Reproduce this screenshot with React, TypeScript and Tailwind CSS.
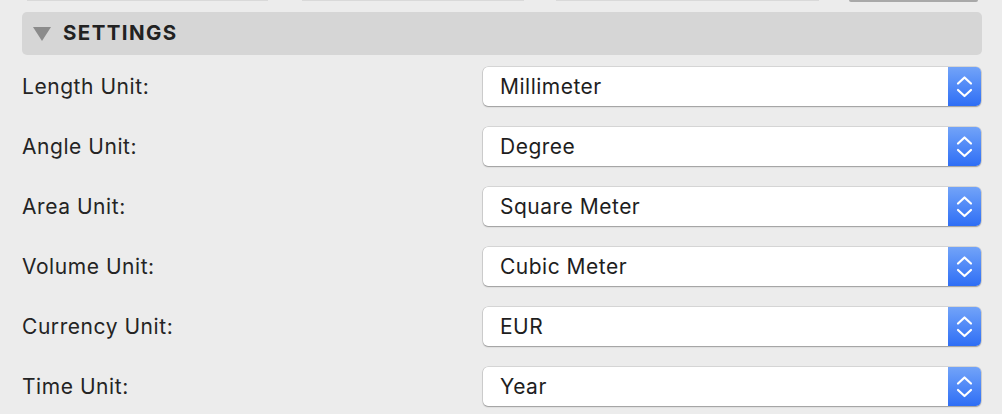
import React from "react";

// Preferences panel: a collapsible SETTINGS group with unit pickers.

const rows: { label: string; value: string }[] = [
  { label: "Length Unit:", value: "Millimeter" },
  { label: "Angle Unit:", value: "Degree" },
  { label: "Area Unit:", value: "Square Meter" },
  { label: "Volume Unit:", value: "Cubic Meter" },
  { label: "Currency Unit:", value: "EUR" },
  { label: "Time Unit:", value: "Year" },
];

function Stepper() {
  return (
    <span className="flex h-full w-[33px] shrink-0 items-center justify-center rounded-r-[5px] bg-gradient-to-b from-[#72a3f8] to-[#2e6df5]">
      <svg width="33" height="39" viewBox="0 0 33 39" fill="none">
        <path d="M10 16.5 L16.5 10.5 L23 16.5" stroke="white" strokeWidth="2.2" strokeLinecap="round" strokeLinejoin="round" />
        <path d="M10 23 L16.5 29 L23 23" stroke="white" strokeWidth="2.2" strokeLinecap="round" strokeLinejoin="round" />
      </svg>
    </span>
  );
}

function UnitSelect({ value }: { value: string }) {
  return (
    <div className="flex h-[39px] w-[498px] items-center rounded-[5px] bg-white shadow-[0_0_0_0.5px_rgba(0,0,0,0.18),0_1px_1.5px_rgba(0,0,0,0.28)]">
      <span className="flex-1 pl-[17px] text-[21px] leading-none tracking-[0.5px] text-[#1e1e1e]">{value}</span>
      <Stepper />
    </div>
  );
}

export default function App() {
  return (
    <main className="h-[414px] w-[1002px] overflow-hidden bg-[#ececec] font-['Inter','Liberation_Sans',sans-serif]">
      {/* bottoms of the controls scrolled above */}
      <div className="flex h-[2px]">
        <span className="ml-[27px] h-[1px] w-[241px] bg-[#d9d9d9]" />
        <span className="ml-[34px] h-[1px] w-[222px] bg-[#d9d9d9]" />
        <span className="ml-[32px] h-[1px] w-[263px] bg-[#d9d9d9]" />
        <span className="ml-[30px] h-[2px] w-[129px] rounded-b bg-[#a9a9a9]" />
      </div>

      <header className="mx-[20px] ml-[22px] mt-[10px] flex h-[43px] items-center gap-[12px] rounded-[5px] bg-[#d6d6d6] pl-[11px]">
        <svg width="18" height="14" viewBox="0 0 18 14">
          <path d="M0 0 H18 L9 14 Z" fill="#8b8b8b" />
        </svg>
        <h2 className="text-[20.5px] font-bold tracking-[1.4px] text-[#222]">SETTINGS</h2>
      </header>

      <section className="mt-[1px]">
        {rows.map((r) => (
          <div key={r.label} className="flex h-[60px] items-center pl-[22px] pr-[21px]">
            <span className="flex-1 text-[21px] leading-none tracking-[0.55px] text-[#242424]">{r.label}</span>
            <UnitSelect value={r.value} />
          </div>
        ))}
      </section>
    </main>
  );
}
